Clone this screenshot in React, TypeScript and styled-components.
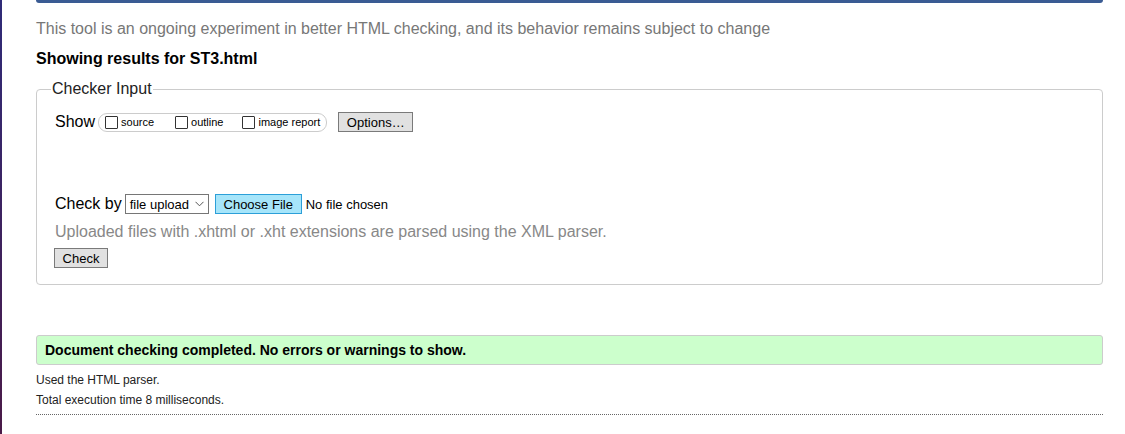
import styled, { createGlobalStyle } from 'styled-components';

const GlobalStyle = createGlobalStyle`
  html, body {
    margin: 0;
    padding: 0;
    background: #fff;
  }
  body {
    font-family: "Liberation Sans", Arial, sans-serif;
    color: #000;
  }
`;

const Frame = styled.div`
  display: flex;
  min-height: 100vh;
`;

const SideRule = styled.div`
  width: 2px;
  flex: none;
  background: linear-gradient(#2f2b78, #4a1a48);
`;

const Page = styled.div`
  flex: 1;
  padding: 0 22px 0 34px;
  display: flex;
  flex-direction: column;
`;

const TopBar = styled.div`
  height: 3px;
  background: #3a5b93;
  border-radius: 0 0 4px 4px;
`;

const Intro = styled.p`
  margin: 17px 0 0;
  font-size: 16px;
  line-height: 18px;
  color: #777;
`;

const Heading = styled.h2`
  margin: 12px 0 0;
  font-size: 16px;
  line-height: 18px;
  font-weight: bold;
`;

const Fieldset = styled.fieldset`
  margin: 12px 0 0;
  padding: 14px 18px 16px 18px;
  border: 1px solid #ccc;
  border-radius: 4px;
  min-width: 0;
`;

const Legend = styled.legend`
  padding: 0 1px;
  margin-left: -4px;
  font-size: 16px;
  line-height: 18px;
  color: #222;
`;

const Row = styled.div<{ $top?: number }>`
  display: flex;
  align-items: center;
  margin-top: ${(p) => p.$top ?? 0}px;
  height: 20px;
`;

const Label = styled.span`
  font-size: 16px;
  margin-right: 3px;
`;

const Pill = styled.div`
  display: flex;
  align-items: center;
  height: 17px;
  padding: 0 6px 0 6px;
  border: 1px solid #ccc;
  border-radius: 9px;
  margin-right: 11px;
`;

const Option = styled.label<{ $gap?: number }>`
  display: flex;
  align-items: center;
  font-size: 11px;
  margin-right: ${(p) => p.$gap ?? 0}px;
`;

const Box = styled.span`
  width: 11px;
  height: 11px;
  border: 1px solid #333;
  background: #fff;
  margin-right: 3px;
  border-radius: 1px;
`;

const Button = styled.button<{ $w: number; $blue?: boolean }>`
  width: ${(p) => p.$w}px;
  height: 20px;
  padding: 0;
  font-family: "Liberation Sans", Arial, sans-serif;
  font-size: 13px;
  color: #000;
  background: ${(p) => (p.$blue ? '#a6e5fa' : '#e1e1e1')};
  border: 1px solid ${(p) => (p.$blue ? '#2c9fd8' : '#7a7a7a')};
  border-radius: 0;
`;

const Select = styled.div`
  display: flex;
  align-items: center;
  justify-content: space-between;
  box-sizing: border-box;
  width: 84px;
  height: 20px;
  padding: 0 4px 0 4px;
  border: 1px solid #767676;
  font-size: 13px;
  margin-right: 6px;
`;

const Chosen = styled.span`
  font-size: 13px;
  margin-left: 4px;
`;

const Note = styled.p`
  margin: 9px 0 0;
  font-size: 16px;
  line-height: 18px;
  color: #888;
`;

const Success = styled.div`
  margin-top: 50px;
  height: 28px;
  display: flex;
  align-items: center;
  padding: 0 8px;
  background: #ccffcc;
  border: 1px solid #ccc;
  border-radius: 3px;
  font-size: 14px;
  font-weight: bold;
`;

const Meta = styled.p<{ $top: number }>`
  margin: ${(p) => p.$top}px 0 0;
  font-size: 12px;
  line-height: 14px;
  color: #222;
`;

const Dotted = styled.hr`
  margin: 7px 0 0;
  border: 0;
  border-top: 1px dotted #666;
  height: 0;
`;

export default function App() {
  return (
    <Frame>
      <GlobalStyle />
      <SideRule />
      <Page>
        <TopBar />
        <Intro>
          This tool is an ongoing experiment in better HTML checking, and its behavior remains subject to change
        </Intro>
        <Heading>Showing results for ST3.html</Heading>
        <Fieldset>
          <Legend>Checker Input</Legend>
          <Row>
            <Label>Show</Label>
            <Pill>
              <Option $gap={21}>
                <Box />
                source
              </Option>
              <Option $gap={19}>
                <Box />
                outline
              </Option>
              <Option>
                <Box />
                image report
              </Option>
            </Pill>
            <Button $w={75}>Options…</Button>
          </Row>
          <Row $top={62}>
            <Label>Check by</Label>
            <Select>
              file upload
              <svg width="9" height="6" viewBox="0 0 9 6">
                <path d="M0.5 0.8 L4.5 4.8 L8.5 0.8" fill="none" stroke="#555" strokeWidth="1" />
              </svg>
            </Select>
            <Button $w={87} $blue>Choose File</Button>
            <Chosen>No file chosen</Chosen>
          </Row>
          <Note>Uploaded files with .xhtml or .xht extensions are parsed using the XML parser.</Note>
          <Row $top={7}>
            <Button $w={54} style={{ marginLeft: -1 }}>Check</Button>
          </Row>
        </Fieldset>
        <Success>Document checking completed. No errors or warnings to show.</Success>
        <Meta $top={8}>Used the HTML parser.</Meta>
        <Meta $top={6}>Total execution time 8 milliseconds.</Meta>
        <Dotted />
      </Page>
    </Frame>
  );
}
